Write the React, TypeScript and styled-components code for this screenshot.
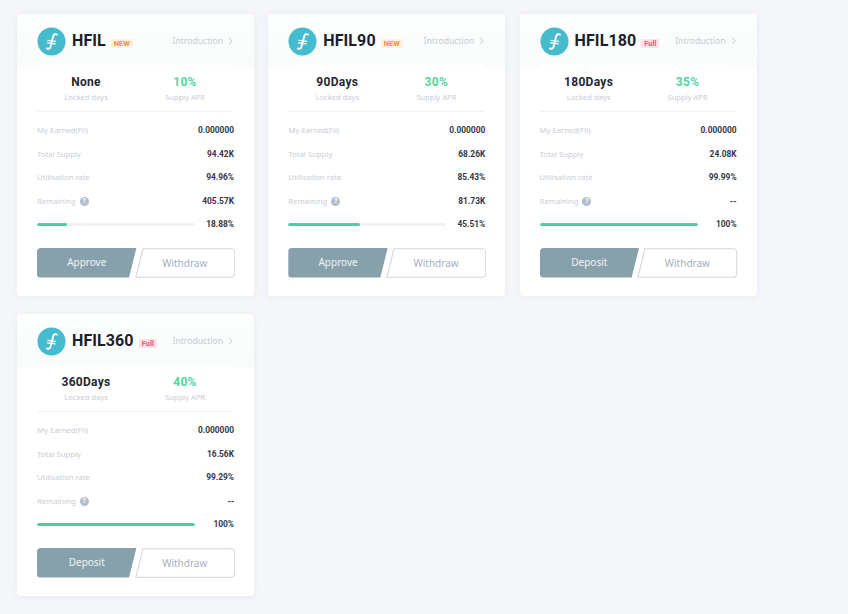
import React from "react";
import styled, { createGlobalStyle } from "styled-components";

const Global = createGlobalStyle`
  html, body { margin: 0; padding: 0; background: #f5f6fa; }
  body { font-family: "Noto Sans", "Open Sans", sans-serif; width: 848px; height: 614px; overflow: hidden; }
`;
const Page = styled.div`
  display: grid;
  grid-template-columns: repeat(3, 237px);
  column-gap: 14.3px;
  row-gap: 18px;
  padding: 14px 0 0 17px;
`;
const Card = styled.section`
  width: 237px;
  height: 282px;
  box-sizing: border-box;
  background: #fff;
  border-radius: 4px;
  box-shadow: 0 1px 6px rgba(200, 208, 225, 0.25);
  overflow: hidden;
  display: flex;
  flex-direction: column;
`;
const Head = styled.header`
  height: 54px;
  padding: 0 20px;
  display: flex;
  align-items: center;
  background: linear-gradient(180deg, #fdfefe 0%, #f8fcfb 100%);
  flex: none;
`;
const Coin = styled.svg`
  width: 29px;
  height: 29px;
  margin-right: 6px;
  flex: none;
`;
const Title = styled.h2`
  margin: 0;
  font: 700 16px/20px Roboto, sans-serif;
  letter-spacing: 0.1px;
  color: #1b1f2b;
`;
const Tag = styled.span<{ $full?: boolean }>`
  margin-left: 5px;
  margin-top: 5px;
  padding: 0 3px;
  height: 9px;
  font: 700 7.5px/9px Roboto, sans-serif;
  color: ${p => (p.$full ? "#f0566f" : "#f7913a")};
  background: ${p => (p.$full ? "#fde3e8" : "#fdf0e2")};
  border-radius: 1px;
`;
const Intro = styled.div`
  margin-left: auto;
  margin-right: 1px;
  display: flex;
  align-items: center;
  gap: 5px;
  font-size: 8.6px;
  color: #c5cad3;
`;
const Panel = styled.div`
  margin: -3px 20px 0;
  padding-top: 9px;
  background: #fff;
  border-radius: 4px 4px 0 0;
  flex: 1;
  display: flex;
  flex-direction: column;
`;
const Stats = styled.div`
  display: grid;
  grid-template-columns: 98px 100px;
  height: 37px;
  flex: none;
  border-bottom: 1px solid #f1f2f5;
  margin-bottom: 6.5px;
`;
const Stat = styled.div`
  display: flex;
  flex-direction: column;
  align-items: center;
`;
const StatValue = styled.div<{ $green?: boolean }>`
  font: 700 12px/16px Roboto, sans-serif;
  letter-spacing: 0.3px;
  color: ${p => (p.$green ? "#54d6a0" : "#232733")};
`;
const StatLabel = styled.div`
  margin-top: 1px;
  font-size: 7.6px;
  line-height: 12px;
  color: #c9ced6;
`;
const Row = styled.div`
  height: 23.5px;
  flex: none;
  display: flex;
  align-items: center;
  justify-content: space-between;
`;
const Label = styled.div`
  display: flex;
  align-items: center;
  gap: 3px;
  font-size: 7.7px;
  color: #c9ced6;
`;
const Help = styled.span`
  width: 9px;
  height: 9px;
  margin-left: 1px;
  margin-top: 1px;
  border-radius: 50%;
  background: #b4bccd;
  color: #fff;
  font: 700 7px/9px Roboto, sans-serif;
  text-align: center;
`;
const Value = styled.div`
  font: 700 8.4px/12px Roboto, sans-serif;
  color: #333845;
`;
const Track = styled.div`
  width: 158px;
  height: 3px;
  margin-top: 0.5px;
  border-radius: 2px;
  background: #f1f2f5;
  overflow: hidden;
`;
const Fill = styled.div`
  height: 100%;
  border-radius: 2px;
  background: #45d29c;
`;
const Buttons = styled.div`
  margin-top: 11.5px;
  margin-right: -1px;
  height: 30px;
  flex: none;
  display: flex;
  justify-content: space-between;
`;
const Primary = styled.div`
  width: 100px;
  height: 30px;
  background: #86a0ac;
  color: #f1f5f6;
  font-size: 10px;
  line-height: 29px;
  text-align: center;
  border-radius: 4px 0 0 4px;
  clip-path: polygon(0 0, 100% 0, 92.5% 100%, 0 100%);
`;
const Secondary = styled.div`
  position: relative;
  margin-left: -2px;
  width: 101px;
  height: 30px;
  display: flex;
  align-items: center;
  justify-content: center;
  color: #a5afbd;
  font-size: 10px;
  box-sizing: border-box;
`;
const Outline = styled.svg`
  position: absolute;
  inset: 0;
  width: 100%;
  height: 100%;
`;
const SecondaryText = styled.span`
  position: relative;
`;

type P = { name: string; tag: "NEW" | "Full"; days: string; apr: string; supply: string; rate: string; remain: string; pct: string; width: number; action: string };
const data: P[] = [
  { name: "HFIL", tag: "NEW", days: "None", apr: "10%", supply: "94.42K", rate: "94.96%", remain: "405.57K", pct: "18.88%", width: 18.88, action: "Approve" },
  { name: "HFIL90", tag: "NEW", days: "90Days", apr: "30%", supply: "68.26K", rate: "85.43%", remain: "81.73K", pct: "45.51%", width: 45.51, action: "Approve" },
  { name: "HFIL180", tag: "Full", days: "180Days", apr: "35%", supply: "24.08K", rate: "99.99%", remain: "--", pct: "100%", width: 100, action: "Deposit" },
  { name: "HFIL360", tag: "Full", days: "360Days", apr: "40%", supply: "16.56K", rate: "99.29%", remain: "--", pct: "100%", width: 100, action: "Deposit" },
];

const CoinIcon = () => (
  <Coin viewBox="0 0 29 29">
    <circle cx="14.5" cy="14.5" r="14" fill="#45bccd" />
    <path d="M20 7.6c-1.4-1-3.1-.4-3.7 1.3L13.4 20c-.5 1.7-2.1 2.3-3.6 1.4" fill="none" stroke="#fff" strokeWidth="1.9" strokeLinecap="round" />
    <path d="M10.8 13.4l7.8 1M10.4 15.8l7.8 1" fill="none" stroke="#fff" strokeWidth="1.2" strokeLinecap="round" />
  </Coin>
);

const Product = ({ d }: { d: P }) => (
  <Card>
    <Head>
      <CoinIcon />
      <Title>{d.name}</Title>
      <Tag $full={d.tag === "Full"}>{d.tag}</Tag>
      <Intro>
        Introduction
        <svg width="5" height="8" viewBox="0 0 5 8"><path d="M1 .8 4.2 4 1 7.2" fill="none" stroke="#c5cad3" strokeWidth="1" /></svg>
      </Intro>
    </Head>
    <Panel>
      <Stats>
        <Stat><StatValue>{d.days}</StatValue><StatLabel>Locked days</StatLabel></Stat>
        <Stat><StatValue $green>{d.apr}</StatValue><StatLabel>Supply APR</StatLabel></Stat>
      </Stats>
      <Row><Label>My Earned(Fil)</Label><Value>0.000000</Value></Row>
      <Row><Label>Total Supply</Label><Value>{d.supply}</Value></Row>
      <Row><Label>Utilisation rate</Label><Value>{d.rate}</Value></Row>
      <Row><Label>Remaining <Help>?</Help></Label><Value>{d.remain}</Value></Row>
      <Row>
        <Track><Fill style={{ width: `${d.width}%` }} /></Track>
        <Value>{d.pct}</Value>
      </Row>
      <Buttons>
        <Primary>{d.action}</Primary>
        <Secondary>
          <Outline viewBox="0 0 101 30">
            <path d="M8 .7H96.5a3.8 3.8 0 0 1 3.8 3.8v21a3.8 3.8 0 0 1-3.8 3.8H.9Z" fill="#fff" stroke="#cfd7de" strokeWidth="1.1" />
          </Outline>
          <SecondaryText>Withdraw</SecondaryText>
        </Secondary>
      </Buttons>
    </Panel>
  </Card>
);

export default function App() {
  return (
    <>
      <Global />
      <Page>{data.map(d => <Product key={d.name} d={d} />)}</Page>
    </>
  );
}
